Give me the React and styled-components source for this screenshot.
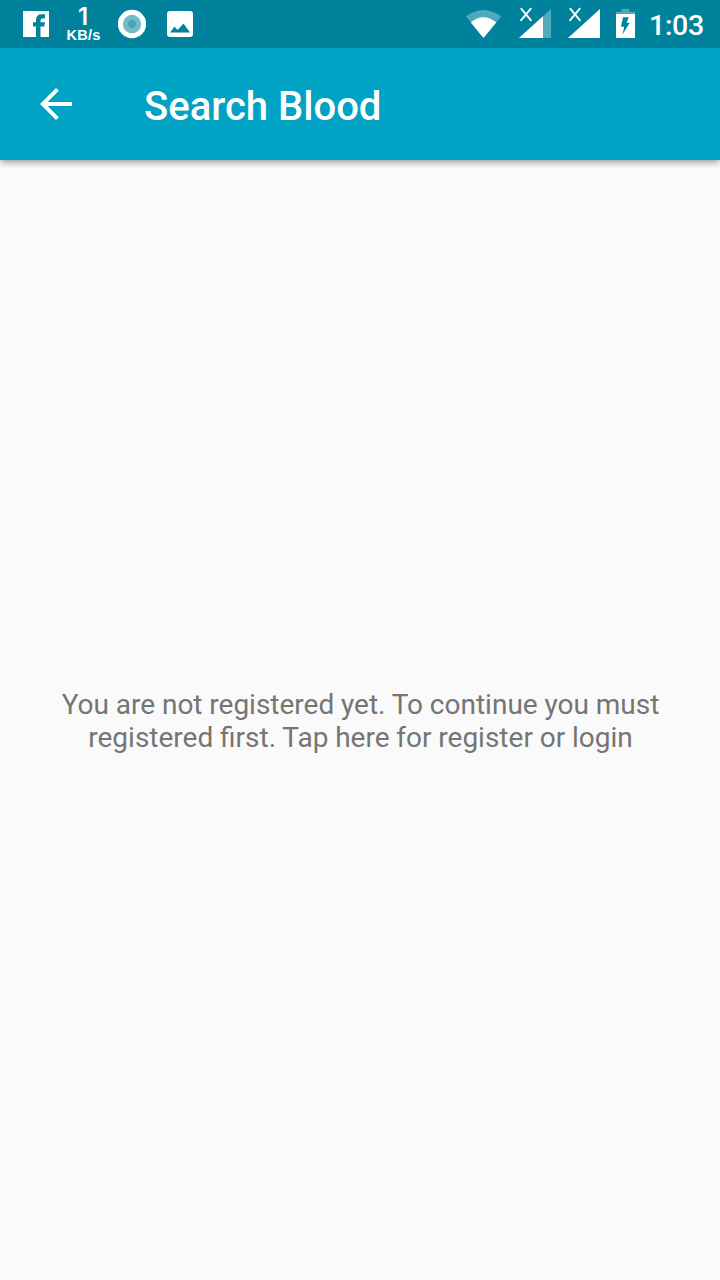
import React from "react";
import styled, { createGlobalStyle } from "styled-components";

const GlobalStyle = createGlobalStyle`
  * { box-sizing: border-box; }
  body { margin: 0; background: #fafafa; font-family: Roboto, sans-serif; }
`;

const Screen = styled.div`
  display: flex;
  flex-direction: column;
  width: 720px;
  height: 1280px;
  background: #fafafa;
  overflow: hidden;
`;

const StatusBar = styled.div`
  position: relative;
  z-index: 1;
  display: flex;
  justify-content: space-between;
  flex: none;
  height: 48px;
  padding: 0 16px 0 23px;
  background: #00829c;
  color: #fff;
`;

const StatusGroup = styled.div`
  display: flex;
  align-items: flex-start;
`;

const StatusIcon = styled.svg`
  display: block;
  flex: none;
  width: ${(p) => p.$w}px;
  height: 48px;
  margin-left: ${(p) => p.$gap || 0}px;
`;

const Speed = styled.div`
  display: flex;
  flex-direction: column;
  align-items: center;
  width: 34px;
  height: 48px;
  margin-left: 17px;
  padding-top: 6px;
  white-space: nowrap;
`;

const SpeedValue = styled.span`
  font-family: Inter, sans-serif;
  font-size: 24px;
  font-weight: 600;
  line-height: 22px;
`;

const SpeedUnit = styled.span`
  padding-left: 1px;
  font-family: "Liberation Sans", sans-serif;
  font-size: 14.5px;
  font-weight: 700;
  letter-spacing: 0.2px;
  line-height: 14px;
`;

const Clock = styled.div`
  margin-left: 14px;
  width: 55px;
  padding-top: 2px;
  font-size: 28.5px;
  font-weight: 500;
  letter-spacing: -0.3px;
  line-height: 48px;
  white-space: nowrap;
`;

const AppBar = styled.header`
  display: flex;
  align-items: center;
  flex: none;
  height: 112px;
  padding-left: 32px;
  background: #00a3c4;
  color: #fff;
  box-shadow: 0 2px 7px rgba(0, 0, 0, 0.42);
`;

const BackButton = styled.button`
  width: 48px;
  height: 48px;
  padding: 0;
  border: 0;
  background: none;
  color: inherit;
`;

const Title = styled.h1`
  margin: 6px 0 0 64px;
  font-size: 40px;
  font-weight: 500;
  line-height: 48px;
`;

const Content = styled.main`
  display: flex;
  flex: 1;
  align-items: center;
  justify-content: center;
  padding: 2px 0 0 1px;
`;

const Message = styled.p`
  margin: 0;
  color: #757575;
  font-size: 28px;
  word-spacing: -0.15px;
  line-height: 33px;
  text-align: center;
`;

function SignalIcon({ level, gap }) {
  return (
    <StatusIcon viewBox="0 0 32 48" $w={32} $gap={gap}>
      <path d="M32 9V38H0Z" fill="#fff" fillOpacity={level < 1 ? 0.32 : 1} />
      {level < 1 && <path d="M24 16.3V38H0Z" fill="#fff" />}
      <path d="M1.8 8.2L12.4 20.8M12.2 8.2L1.6 20.8" stroke="#fff" strokeWidth="1.8" fill="none" />
    </StatusIcon>
  );
}

export default function App() {
  return (
    <>
      <GlobalStyle />
      <Screen>
        <StatusBar>
          <StatusGroup>
            <StatusIcon viewBox="0 0 26 48" $w={26}>
              <path fill="#fff" d="M0 11H26V37H0Z" />
              <path fill="#00829c" d="M13 37V26.5H10V22.3H13V20Q13 14.3 18.5 14.3H22V18.5H19.5Q17.5 18.5 17.5 20.5V22.3H22L21.3 26.5H17.5V37Z" />
            </StatusIcon>
            <Speed>
              <SpeedValue>1</SpeedValue>
              <SpeedUnit>KB/s</SpeedUnit>
            </Speed>
            <StatusIcon viewBox="0 0 28 48" $w={28} $gap={18}>
              <circle cx="14" cy="24" r="14.2" fill="#fff" />
              <circle cx="14" cy="24" r="9.2" fill="#73bbc7" />
              <circle cx="14" cy="24" r="4.2" fill="#46a4b5" />
            </StatusIcon>
            <StatusIcon viewBox="0 0 26 48" $w={26} $gap={21}>
              <rect y="11" width="26" height="26" rx="3" fill="#fff" />
              <path fill="#00829c" d="M3 32.5L7.5 26.5L10.5 30L16.5 23.5L23 32.5Z" />
            </StatusIcon>
          </StatusGroup>
          <StatusGroup>
            <StatusIcon viewBox="0.5 0 36 48" $w={36}>
              <path d="M0.5 16.5Q18 3.5 35.7 16.5L18 38Z" fill="#4fabbc" />
              <path d="M5.3 22.5Q18 12 30.7 22.5L18 38Z" fill="#fff" />
            </StatusIcon>
            <SignalIcon level={0.75} gap={17} />
            <SignalIcon level={1} gap={17} />
            <StatusIcon viewBox="0 0 19 48" $w={19} $gap={16}>
              <path d="M5.5 9H13V11.7H19V15H0V11.7H5.5Z" fill="#4fabbc" />
              <path d="M0 14H19V38H0Z" fill="#fff" />
              <path d="M7 17.3H12.7L10.7 22.8H13.8L6.5 34.5L8.2 26.7H5Z" fill="#00829c" />
            </StatusIcon>
            <Clock>1:03</Clock>
          </StatusGroup>
        </StatusBar>
        <AppBar>
          <BackButton aria-label="Back">
            <svg width="48" height="48" viewBox="0 0 24 24" fill="currentColor">
              <path d="M20 11H7.83l5.59-5.59L12 4l-8 8 8 8 1.41-1.41L7.83 13H20v-2z" />
            </svg>
          </BackButton>
          <Title>Search Blood</Title>
        </AppBar>
        <Content>
          <Message>
            You are not registered yet. To continue you must
            <br />
            registered first. Tap here for register or login
          </Message>
        </Content>
      </Screen>
    </>
  );
}
